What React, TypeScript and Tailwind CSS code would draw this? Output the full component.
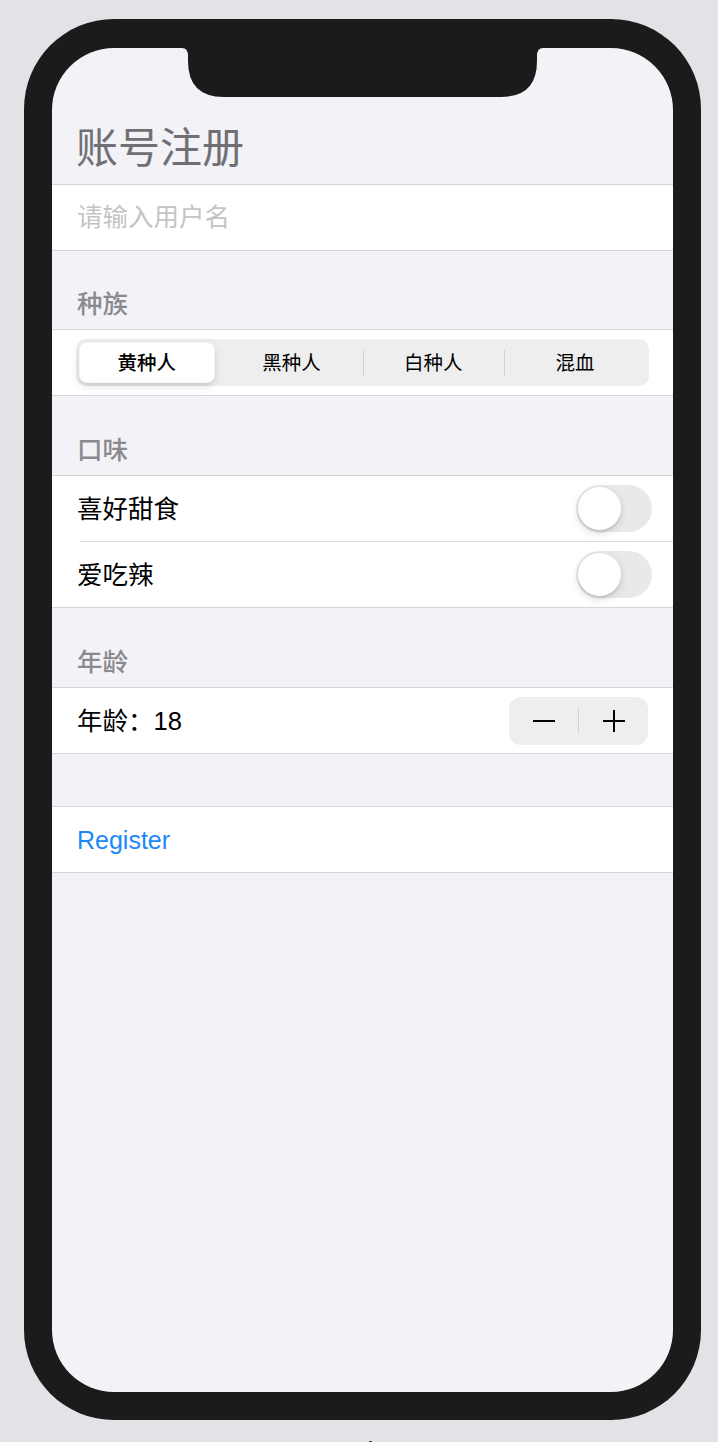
import React, { useState } from 'react';

const races = ['黄种人', '黑种人', '白种人', '混血'];

const Notch: React.FC = () => (
  <svg
    className="absolute top-0 left-[130px]"
    width="361"
    height="49"
    viewBox="0 0 361 49"
  >
    <path
      d="M0 0 Q6 0 6 8 L6 13 Q6 49 42 49 L319 49 Q355 49 355 13 L355 8 Q355 0 361 0 Z"
      fill="#1b1b1b"
    />
  </svg>
);

const Toggle: React.FC<{ on: boolean; onChange: () => void }> = ({ on, onChange }) => (
  <button
    onClick={onChange}
    className={`w-[76px] h-[47px] rounded-full p-[2px] flex ${on ? 'bg-[#34c759] justify-end' : 'bg-[#e9e9ea] justify-start'}`}
  >
    <span className="w-[43px] h-[43px] rounded-full bg-white shadow-[0_3px_8px_rgba(0,0,0,0.15),0_3px_1px_rgba(0,0,0,0.06)]" />
  </button>
);

const SectionHeader: React.FC<{ title: string; height: string }> = ({ title, height }) => (
  <div className={`${height} flex items-end px-[25px] pb-[9px]`}>
    <span className="text-[25.5px] leading-[32px] font-medium text-[#8a8a8e]">{title}</span>
  </div>
);

export default function App() {
  const [race, setRace] = useState(0);
  const [sweet, setSweet] = useState(false);
  const [spicy, setSpicy] = useState(false);
  const [age, setAge] = useState(18);

  return (
    <div className="min-h-screen bg-[#e2e3e7] pt-[19px] pl-[24px] font-['Liberation_Sans','Noto_Sans_CJK_SC',sans-serif]">
      <div className="w-[677px] h-[1401px] rounded-[90px] bg-[#1b1b1b] pt-[29px] pl-[28px]">
        <div className="relative w-[621px] h-[1344px] rounded-[62px] bg-[#f2f2f7] overflow-hidden">
          <Notch />

          {/* title */}
          <div className="h-[136px] pt-[76px] pl-[24px]">
            <h1 className="text-[42px] leading-[50px] text-[#707074]">账号注册</h1>
          </div>

          {/* username */}
          <div className="bg-white border-y border-[#d5d5da]">
            <div className="h-[65px] flex items-center px-[25px] pb-[1px]">
              <input
                type="text"
                placeholder="请输入用户名"
                className="w-full bg-transparent outline-none text-[25.5px] text-black placeholder:text-[#c4c4c6]"
              />
            </div>
          </div>

          <SectionHeader title="种族" height="h-[78px]" />
          <div className="bg-white border-y border-[#d5d5da]">
            <div className="h-[65px] flex items-center px-[24px]">
              <div className="w-full h-[47px] rounded-[10px] bg-[#eeeeef] p-[3px] grid grid-cols-4">
                {races.map((r, i) => (
                  <div key={r} className="relative flex items-center">
                    {i > 0 && i !== race && i - 1 !== race && (
                      <span className="absolute left-0 top-[8px] w-px h-[26px] bg-[#d3d3d6]" />
                    )}
                    <button
                      onClick={() => setRace(i)}
                      className={`h-full flex-1 flex items-center justify-center pt-[2px] rounded-[8px] text-[19.5px] text-black ${
                        i === race
                          ? 'bg-white font-medium mr-[6px] shadow-[0_3px_8px_rgba(0,0,0,0.12),0_3px_1px_rgba(0,0,0,0.04)] border-[0.5px] border-[rgba(0,0,0,0.04)]'
                          : ''
                      }`}
                    >
                      {r}
                    </button>
                  </div>
                ))}
              </div>
            </div>
          </div>

          <SectionHeader title="口味" height="h-[79px]" />
          <div className="bg-white border-y border-[#d5d5da]">
            <div className="ml-[28px] border-b border-[#dcdce0]">
              <div className="h-[65px] -ml-[28px] flex items-center justify-between pl-[25px] pr-[21px]">
                <span className="text-[25.5px] text-black pt-[2px]">喜好甜食</span>
                <Toggle on={sweet} onChange={() => setSweet(!sweet)} />
              </div>
            </div>
            <div className="h-[65px] flex items-center justify-between pl-[25px] pr-[21px]">
              <span className="text-[25.5px] text-black pt-[2px]">爱吃辣</span>
              <Toggle on={spicy} onChange={() => setSpicy(!spicy)} />
            </div>
          </div>

          <SectionHeader title="年龄" height="h-[79px]" />
          <div className="bg-white border-y border-[#d5d5da]">
            <div className="h-[65px] flex items-center justify-between pl-[25px] pr-[25px]">
              <span className="text-[25.5px] text-black pt-[2px]">年龄：{age}</span>
              <div className="w-[139px] h-[48px] rounded-[12px] bg-[#eeeeef] flex items-center">
                <button onClick={() => setAge(age - 1)} className="flex-1 h-full flex items-center justify-center">
                  <svg width="22" height="22" viewBox="0 0 22 22">
                    <line x1="0" y1="11" x2="22" y2="11" stroke="#000" strokeWidth="2" />
                  </svg>
                </button>
                <span className="w-px h-[27px] bg-[#d3d3d6]" />
                <button onClick={() => setAge(age + 1)} className="flex-1 h-full flex items-center justify-center">
                  <svg width="22" height="22" viewBox="0 0 22 22">
                    <line x1="0" y1="11" x2="22" y2="11" stroke="#000" strokeWidth="2" />
                    <line x1="11" y1="0" x2="11" y2="22" stroke="#000" strokeWidth="2" />
                  </svg>
                </button>
              </div>
            </div>
          </div>

          <div className="h-[52px]" />
          <div className="bg-white border-y border-[#d5d5da]">
            <button className="h-[65px] w-full flex items-center px-[25px] pt-[2px] text-[25px] text-[#1e88f9]">
              Register
            </button>
          </div>
        </div>
      </div>
      <div className="ml-[345px] mt-[21px] w-[3px] h-px bg-[#333]" />
    </div>
  );
}
